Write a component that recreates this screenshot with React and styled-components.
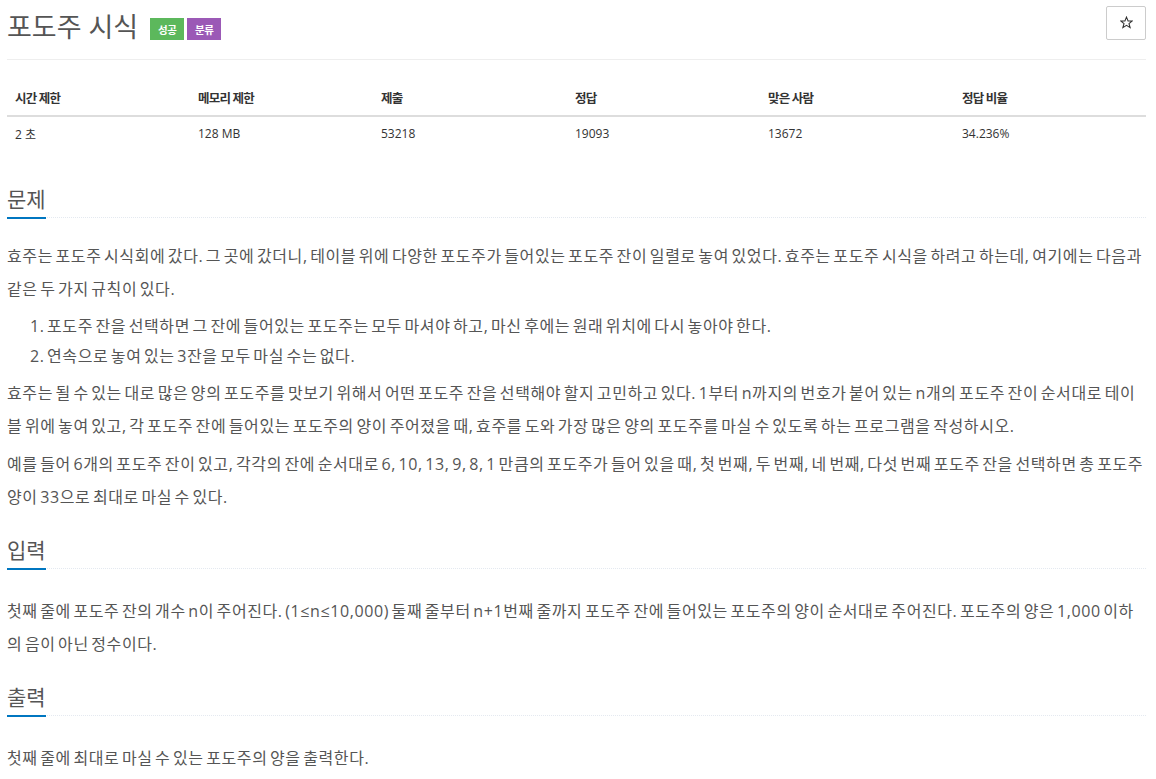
import React from 'react';
import styled, { createGlobalStyle } from 'styled-components';

const GlobalStyle = createGlobalStyle`
  html, body {
    margin: 0;
    padding: 0;
    background: #fff;
  }
  body {
    font-family: "Open Sans", "Noto Sans CJK KR", sans-serif;
    color: #333;
  }
`;

const Page = styled.div`
  padding: 0 10px 0 7px;
`;

const Header = styled.div`
  display: flex;
  align-items: center;
  justify-content: space-between;
  height: 60px;
  border-bottom: 1px solid #eee;
  box-sizing: border-box;
`;

const TitleRow = styled.div`
  display: flex;
  align-items: center;
  gap: 3px;
  margin-top: -4px;
`;

const Title = styled.h1`
  margin: 0 9px 0 0;
  font-size: 27px;
  font-weight: 400;
  color: #555;
  line-height: 1.2;
`;

const Label = styled.span`
  display: inline-flex;
  align-items: center;
  justify-content: center;
  width: 34px;
  height: 22px;
  margin-top: 4px;
  background: ${({ color }) => color};
  color: #fff;
  font-size: 10.5px;
  font-weight: 700;
  letter-spacing: -0.5px;
`;

const StarButton = styled.button`
  width: 40px;
  height: 34px;
  margin-top: -14px;
  border: 1px solid #ccc;
  border-radius: 2px;
  background: #fff;
  display: flex;
  align-items: center;
  justify-content: center;
  padding: 0;
`;

const Table = styled.div`
  margin-top: 19px;
  display: grid;
  grid-template-columns: 183px 183px 194px 193px 194px 1fr;
`;

const HeadCell = styled.div`
  height: 36px;
  padding-left: 8px;
  display: flex;
  align-items: center;
  border-bottom: 2px solid #ddd;
  font-size: 12.5px;
  font-weight: 700;
  letter-spacing: -0.8px;
  color: #333;
`;

const Cell = styled.div`
  height: 33px;
  padding-left: 8px;
  display: flex;
  align-items: center;
  font-size: 12px;
  color: #333;
`;

const Headline = styled.div`
  margin-top: ${({ first }) => (first ? '36px' : '23px')};
  margin-bottom: ${({ first }) => (first ? '22px' : '26px')};
  border-bottom: 1px dotted #e4e9f0;
`;

const H2 = styled.h2`
  display: inline-block;
  margin: 0 0 -2px;
  padding-bottom: 5px;
  border-bottom: 2px solid #0076c0;
  font-size: 21px;
  line-height: 26px;
  font-weight: 400;
  color: #555;
`;

const Text = styled.p`
  margin: 0 0 5px;
  font-size: 16px;
  line-height: 33px;
  letter-spacing: 0.6px;
  word-spacing: -2.2px;
  color: #555;
`;

const List = styled.ol`
  margin: 3px 0 6px;
  padding-left: 40px;
  font-size: 16px;
  letter-spacing: 0.6px;
  word-spacing: -2.2px;
  color: #555;
`;

const Item = styled.li`
  line-height: 30px;
`;

const stats = [
  ['시간 제한', '2 초'],
  ['메모리 제한', '128 MB'],
  ['제출', '53218'],
  ['정답', '19093'],
  ['맞은 사람', '13672'],
  ['정답 비율', '34.236%'],
];

function StarIcon() {
  return (
    <svg width="13" height="13" viewBox="0 0 24 24" fill="none" stroke="#333" strokeWidth="2" strokeLinejoin="miter">
      <polygon points="12,2 14.9,9 22.5,9.3 16.6,14.1 18.7,21.5 12,17.3 5.3,21.5 7.4,14.1 1.5,9.3 9.1,9" />
    </svg>
  );
}

function Section({ title, first, children }) {
  return (
    <>
      <Headline first={first}>
        <H2>{title}</H2>
      </Headline>
      {children}
    </>
  );
}

export default function App() {
  return (
    <Page>
      <GlobalStyle />
      <Header>
        <TitleRow>
          <Title>포도주 시식</Title>
          <Label color="#5cb85c">성공</Label>
          <Label color="#9b59b6">분류</Label>
        </TitleRow>
        <StarButton aria-label="즐겨찾기">
          <StarIcon />
        </StarButton>
      </Header>

      <Table>
        {stats.map(([k]) => <HeadCell key={k}>{k}</HeadCell>)}
        {stats.map(([k, v]) => <Cell key={k}>{v}</Cell>)}
      </Table>

      <Section title="문제" first>
        <Text>
          효주는 포도주 시식회에 갔다. 그 곳에 갔더니, 테이블 위에 다양한 포도주가 들어있는 포도주 잔이 일렬로 놓여 있었다. 효주는 포도주 시식을 하려고 하는데, 여기에는 다음과 같은 두 가지 규칙이 있다.
        </Text>
        <List>
          <Item>포도주 잔을 선택하면 그 잔에 들어있는 포도주는 모두 마셔야 하고, 마신 후에는 원래 위치에 다시 놓아야 한다.</Item>
          <Item>연속으로 놓여 있는 3잔을 모두 마실 수는 없다.</Item>
        </List>
        <Text>
          효주는 될 수 있는 대로 많은 양의 포도주를 맛보기 위해서 어떤 포도주 잔을 선택해야 할지 고민하고 있다. 1부터 n까지의 번호가 붙어 있는 n개의 포도주 잔이 순서대로 테이블 위에 놓여 있고, 각 포도주 잔에 들어있는 포도주의 양이 주어졌을 때, 효주를 도와 가장 많은 양의 포도주를 마실 수 있도록 하는 프로그램을 작성하시오.
        </Text>
        <Text>
          예를 들어 6개의 포도주 잔이 있고, 각각의 잔에 순서대로 6, 10, 13, 9, 8, 1 만큼의 포도주가 들어 있을 때, 첫 번째, 두 번째, 네 번째, 다섯 번째 포도주 잔을 선택하면 총 포도주 양이 33으로 최대로 마실 수 있다.
        </Text>
      </Section>

      <Section title="입력">
        <Text>
          첫째 줄에 포도주 잔의 개수 n이 주어진다. (1≤n≤10,000) 둘째 줄부터 n+1번째 줄까지 포도주 잔에 들어있는 포도주의 양이 순서대로 주어진다. 포도주의 양은 1,000 이하의 음이 아닌 정수이다.
        </Text>
      </Section>

      <Section title="출력">
        <Text>첫째 줄에 최대로 마실 수 있는 포도주의 양을 출력한다.</Text>
      </Section>
    </Page>
  );
}
